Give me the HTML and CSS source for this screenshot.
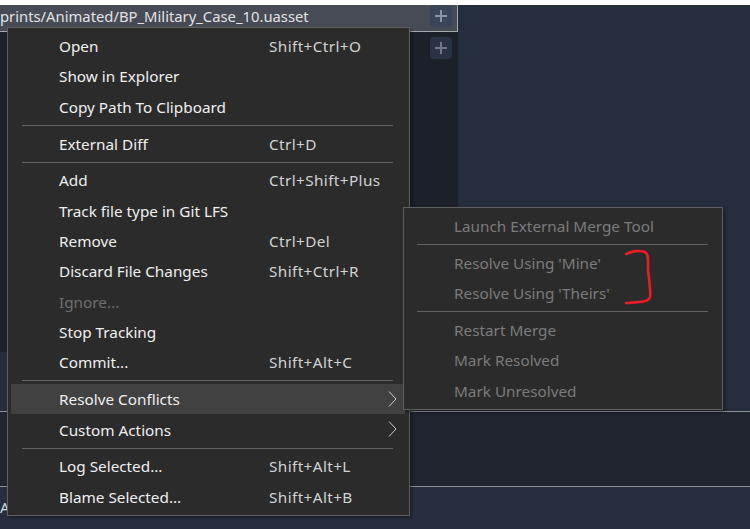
FILE: index.html
```html
<!DOCTYPE html>
<html>
<head>
<meta charset="utf-8">
<link rel="stylesheet" href="styles.css">
</head>
<body>
<div class="page">
  <div class="topline"></div>
  <div class="main">
    <div class="leftpane">
      <div class="tab">
        <span class="tab-title">prints/Animated/BP_Military_Case_10.uasset</span>
        <span class="plus-btn light"><svg width="12" height="12" viewBox="0 0 12 12"><path d="M6 0V12M0 6H12" stroke="#8c95a3" stroke-width="2"/></svg></span>
      </div>
      <div class="list">
        <span class="plus-btn dark"><svg width="12" height="12" viewBox="0 0 12 12"><path d="M6 0V12M0 6H12" stroke="#6f7888" stroke-width="2"/></svg></span>
      </div>
    </div>
    <div class="rightpane"></div>
  </div>
  <div class="gap"></div>
  <div class="panel"></div>
  <div class="status"><span class="status-label">A</span></div>

  <div class="menu main-menu">
    <div class="item"><span class="label">Open</span><span class="key">Shift+Ctrl+O</span></div>
    <div class="item"><span class="label">Show in Explorer</span></div>
    <div class="item"><span class="label">Copy Path To Clipboard</span></div>
    <div class="sep"></div>
    <div class="item"><span class="label">External Diff</span><span class="key">Ctrl+D</span></div>
    <div class="sep"></div>
    <div class="item"><span class="label">Add</span><span class="key">Ctrl+Shift+Plus</span></div>
    <div class="item"><span class="label">Track file type in Git LFS</span></div>
    <div class="item"><span class="label">Remove</span><span class="key">Ctrl+Del</span></div>
    <div class="item"><span class="label">Discard File Changes</span><span class="key">Shift+Ctrl+R</span></div>
    <div class="item disabled"><span class="label">Ignore...</span></div>
    <div class="item"><span class="label">Stop Tracking</span></div>
    <div class="item"><span class="label">Commit...</span><span class="key">Shift+Alt+C</span></div>
    <div class="sep"></div>
    <div class="item active"><span class="label">Resolve Conflicts</span><svg class="chev" width="9" height="16" viewBox="0 0 9 16"><path d="M1 0.5L8 8L1 15.5" fill="none" stroke="#cfcfcf" stroke-width="1"/></svg></div>
    <div class="item"><span class="label">Custom Actions</span><svg class="chev" width="9" height="16" viewBox="0 0 9 16"><path d="M1 0.5L8 8L1 15.5" fill="none" stroke="#cfcfcf" stroke-width="1"/></svg></div>
    <div class="sep"></div>
    <div class="item"><span class="label">Log Selected...</span><span class="key">Shift+Alt+L</span></div>
    <div class="item"><span class="label">Blame Selected...</span><span class="key">Shift+Alt+B</span></div>
  </div>

  <div class="menu sub-menu">
    <div class="item disabled"><span class="label">Launch External Merge Tool</span></div>
    <div class="sep"></div>
    <div class="item disabled"><span class="label">Resolve Using 'Mine'</span></div>
    <div class="item disabled"><span class="label">Resolve Using 'Theirs'</span></div>
    <div class="sep"></div>
    <div class="item disabled"><span class="label">Restart Merge</span></div>
    <div class="item disabled"><span class="label">Mark Resolved</span></div>
    <div class="item disabled"><span class="label">Mark Unresolved</span></div>
  </div>

  <svg class="annot" width="750" height="529" viewBox="0 0 750 529">
    <path d="M626 254 C632 251 640 250 645 252 C649 254 648 262 648 270 C649 280 651 290 650 297 C649 302 640 302 626 303" fill="none" stroke="#ec1c24" stroke-width="2.6" stroke-linecap="round" stroke-linejoin="round"/>
  </svg>
</div>
</body>
</html>
```

FILE: styles.css
```css
* { box-sizing: border-box; }
html, body { margin: 0; padding: 0; }
body {
  width: 750px;
  height: 529px;
  overflow: hidden;
  background: #262e3e;
  font-family: "Noto Sans", "DejaVu Sans", sans-serif;
}
.page {
  position: relative;
  width: 750px;
  height: 529px;
  display: flex;
  flex-direction: column;
}
.topline { height: 5px; background: #ffffff; flex: none; }
.main { display: flex; height: 347px; flex: none; }
.leftpane { width: 458px; display: flex; flex-direction: column; flex: none; }
.tab {
  height: 27px;
  background: #474b55;
  border-bottom: 1px solid #a3a7ae;
  border-right: 1px solid #a3a7ae;
  display: flex;
  align-items: center;
  justify-content: space-between;
  padding-right: 5px;
  overflow: hidden;
}
.tab-title {
  color: #e2e2e2;
  font-size: 14.8px;
  white-space: nowrap;
  margin-top: -4px;
}
.plus-btn {
  width: 22px;
  height: 22px;
  border-radius: 4px;
  display: flex;
  align-items: center;
  justify-content: center;
  flex: none;
}
.plus-btn.light { background: #3b4559; margin-top: -5px; }
.plus-btn.dark { background: #2a3345; }
.list {
  flex: 1;
  background: #1c2029;
  display: flex;
  justify-content: flex-end;
  padding: 5px 6px 0 0;
  align-items: flex-start;
}
.rightpane { flex: 1; background: #262e3e; }
.gap { height: 59px; flex: none; background: #262e3e; }
.panel {
  height: 76px;
  flex: none;
  background: #20252f;
  border-top: 1px solid #8d9198;
  border-bottom: 1px solid #8d9198;
}
.status {
  flex: 1;
  background: #272e40;
  padding-top: 9px;
}
.status-label { color: #d8d8d8; font-size: 15px; }

.menu {
  position: absolute;
  background: #2b2b2b;
  border: 1px solid #5f5f5f;
  padding: 3px 4px 3px 3px;
  box-shadow: 2px 2px 3px rgba(0,0,0,0.35);
  font-size: 15.3px;
}
.main-menu { left: 7px; top: 27px; width: 403px; }
.sub-menu { left: 403px; top: 207px; width: 320px; }
.item {
  height: 30.33px;
  display: flex;
  align-items: center;
  padding-left: 48px;
  color: #efefef;
  white-space: nowrap;
  position: relative;
}
.sub-menu .item { padding-left: 47px; }
.item .label { width: 210px; flex: none; }
.item .key { color: #d2d2d2; letter-spacing: 0.4px; }
.item.disabled, .item.disabled .label { color: #7b7b7b; }
.main-menu .item.disabled .label { color: #6e6e6e; }
.item.active { background: #414141; }
.chev { position: absolute; right: 8px; top: 7px; }
.sep {
  height: 6.5px;
  display: flex;
  align-items: center;
  padding: 0 12px 0 11px;
}
.sep::before {
  content: "";
  display: block;
  flex: 1;
  height: 1px;
  background: #626262;
}
.sub-menu .sep { padding: 0 10px; }
.annot { position: absolute; left: 0; top: 0; pointer-events: none; }
```
